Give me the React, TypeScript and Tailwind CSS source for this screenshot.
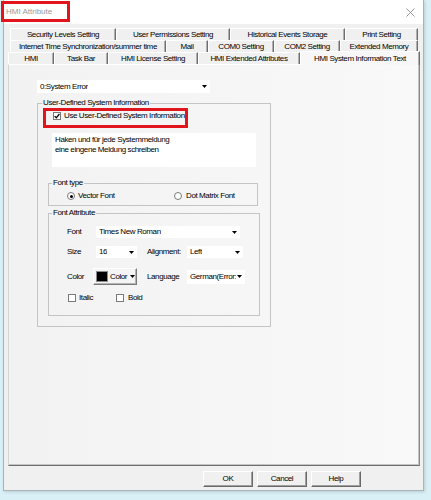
import React from 'react';

const font = "font-['Liberation_Sans',Arial,sans-serif] text-[8px] leading-[10px] tracking-[-0.4px] text-black";

interface Tab {
  label: string;
  w: string;
}

const row1: Tab[] = [
  { label: 'Security Levels Setting', w: 'w-[106px]' },
  { label: 'User Permissions Setting', w: 'w-[114px]' },
  { label: 'Historical Events Storage', w: 'w-[115px]' },
  { label: 'Print Setting', w: 'w-[73px]' },
];

const row2: Tab[] = [
  { label: 'Internet Time Synchronization/summer time', w: 'w-[156px]' },
  { label: 'Mail', w: 'w-[42px]' },
  { label: 'COM0 Setting', w: 'w-[66px]' },
  { label: 'COM2 Setting', w: 'w-[66px]' },
  { label: 'Extended Memory', w: 'w-[78px]' },
];

const row3: Tab[] = [
  { label: 'HMI', w: 'w-[46px]' },
  { label: 'Task Bar', w: 'w-[54px]' },
  { label: 'HMI License Setting', w: 'w-[90px]' },
  { label: 'HMI Extended Attributes', w: 'w-[102px]' },
];

function Arrow() {
  return (
    <svg width="5" height="3" viewBox="0 0 5 3" className="shrink-0">
      <path d="M0 0h5L2.5 3z" fill="#000" />
    </svg>
  );
}

function TabRow({ tabs }: { tabs: Tab[] }) {
  return (
    <>
      {tabs.map((t) => (
        <div
          key={t.label}
          className={`${t.w} h-[12px] flex items-center justify-center border-t border-l border-t-white border-l-white border-r border-r-[#6e6e6e] shadow-[inset_-1px_0_0_#b0b0b0] whitespace-nowrap`}
        >
          {t.label}
        </div>
      ))}
    </>
  );
}

function Dropdown({ className, text }: { className: string; text: string }) {
  return (
    <div className={`flex items-center justify-between bg-white pl-[3px] pr-[3px] ${className}`}>
      <span className="whitespace-nowrap overflow-hidden">{text}</span>
      <Arrow />
    </div>
  );
}

function Check({ checked }: { checked?: boolean }) {
  return (
    <div className="w-[8px] h-[8px] shrink-0 border border-[#7a7a7a] bg-white flex items-center justify-center">
      {checked && (
        <svg width="6" height="6" viewBox="0 0 6 6">
          <path d="M0.6 3.1L2.3 4.8L5.4 1" stroke="#000" strokeWidth="1.3" fill="none" />
        </svg>
      )}
    </div>
  );
}

function Radio({ checked }: { checked?: boolean }) {
  return (
    <div className="w-[8px] h-[8px] shrink-0 rounded-full border border-[#7a7a7a] bg-white flex items-center justify-center">
      {checked && <div className="w-[3px] h-[3px] rounded-full bg-black" />}
    </div>
  );
}

function Button({ label }: { label: string }) {
  return (
    <div className="w-[50px] h-[16px] flex items-center justify-center bg-[#f0f0f0] border border-t-white border-l-white border-r-[#696969] border-b-[#696969] shadow-[inset_-1px_-1px_0_#a0a0a0]">
      {label}
    </div>
  );
}

export default function App() {
  return (
    <div className={`relative w-[431px] h-[500px] bg-[#d9f0f6] pl-[3px] overflow-hidden ${font}`}>
      <div className="w-[421px] h-[491px] flex flex-col bg-[#f0f0f0] border-l border-r border-b border-[#a9b4b9] shadow-[1px_1px_3px_rgba(0,0,0,0.15)]">
        {/* title bar */}
        <div className="h-[24px] shrink-0 bg-white flex items-center justify-between pl-[2px] pr-[8px]">
          <span className="text-[8px] text-[#9a9a9a] tracking-[0px]">HMI Attribute</span>
          <svg width="9" height="9" viewBox="0 0 9 9">
            <path d="M0.5 0.5l8 8M8.5 0.5l-8 8" stroke="#8a8a8a" strokeWidth="0.9" />
          </svg>
        </div>

        {/* tabs */}
        <div className="pt-[4px] flex flex-col">
          <div className="flex ml-[6px]">
            <TabRow tabs={row1} />
          </div>
          <div className="flex ml-[6px]">
            <TabRow tabs={row2} />
          </div>
          <div className="flex items-end ml-[4px] h-[12px]">
            <TabRow tabs={row3} />
            <div className="relative z-10 -mb-[1px] w-[120px] h-[14px] flex items-center justify-center bg-[#f7f7f7] border-t border-l border-t-white border-l-white border-r border-r-[#6e6e6e] shadow-[inset_-1px_0_0_#b0b0b0] whitespace-nowrap">
              HMI System Information Text
            </div>
          </div>
        </div>

        {/* panel */}
        <div className="ml-[4px] w-[412px] h-[402px] shrink-0 border border-t-white border-l-[#d4d4d4] border-r-[#8a8a8a] border-b-[#6f6f6f] shadow-[inset_-1px_-1px_0_#c4c4c4] bg-gradient-to-r from-[#f2f2f2] to-[#f9f9f9] pl-[28px] pt-[15px]">
          <Dropdown className="w-[173px] h-[13px]" text="0:System Error" />

          <fieldset className="mt-[5px] w-[234px] h-[229px] border border-[#c4c4c4]">
            <legend className="ml-[4px] px-[1px] leading-[10px]">User-Defined System Information</legend>

            <div className="flex items-center h-[10px] mt-[3px] ml-[15px]">
              <Check checked />
              <span className="ml-[3px] whitespace-nowrap">Use User-Defined System Information</span>
            </div>

            <div className="mt-[12px] ml-[14px] w-[204px] h-[34px] bg-white pl-[3px] pt-[2px]">
              <div>Haken und für jede Systemmeldung</div>
              <div>eine eingene Meldung schreiben</div>
            </div>

            <fieldset className="mt-[11px] ml-[10px] w-[210px] h-[28px] border border-[#c4c4c4]">
              <legend className="ml-[3px] px-[1px] leading-[10px]">Font type</legend>
              <div className="flex items-center h-[10px] mt-[3px] ml-[18px]">
                <div className="w-[107px] flex items-center">
                  <Radio checked />
                  <span className="ml-[3px]">Vector Font</span>
                </div>
                <Radio />
                <span className="ml-[4px]">Dot Matrix Font</span>
              </div>
            </fieldset>

            <fieldset className="mt-[2px] ml-[10px] w-[212px] h-[108px] border border-[#c4c4c4]">
              <legend className="ml-[3px] px-[1px] leading-[10px]">Font Attribute</legend>

              <div className="flex items-center mt-[8px] ml-[18px]">
                <span className="w-[29px]">Font</span>
                <Dropdown className="w-[144px] h-[12px]" text="Times New Roman" />
              </div>

              <div className="flex items-center mt-[8px] ml-[18px]">
                <span className="w-[29px]">Size</span>
                <Dropdown className="w-[41px] h-[12px]" text="16" />
                <span className="ml-[10px] w-[40px]">Alignment:</span>
                <Dropdown className="w-[56px] h-[12px]" text="Left" />
              </div>

              <div className="flex items-center mt-[10px] ml-[18px]">
                <span className="w-[26px]">Color</span>
                <div className="w-[44px] h-[17px] flex items-center gap-[3px] pl-[3px] border border-t-white border-l-white border-r-[#7a7a7a] border-b-[#7a7a7a] shadow-[inset_-1px_-1px_0_#b4b4b4]">
                  <div className="w-[10px] h-[9px] bg-black outline outline-[#8a8a8a]" />
                  <span>Color</span>
                  <Arrow />
                </div>
                <span className="ml-[10px] w-[40px]">Language</span>
                <Dropdown className="w-[58px] h-[14px]" text="German(Error:" />
              </div>

              <div className="flex items-center h-[10px] mt-[8px] ml-[19px]">
                <div className="w-[48px] flex items-center">
                  <Check />
                  <span className="ml-[3px]">Italic</span>
                </div>
                <Check />
                <span className="ml-[4px]">Bold</span>
              </div>
            </fieldset>
          </fieldset>
        </div>

        {/* footer buttons */}
        <div className="flex justify-end gap-[4px] pt-[5px] pr-[62px]">
          <Button label="OK" />
          <Button label="Cancel" />
          <Button label="Help" />
        </div>
      </div>

      {/* red annotation frames */}
      <div className="absolute left-[1px] top-[1px] w-[69px] h-[21px] border-[3px] border-[#e3151c]" />
      <div className="absolute left-[43px] top-[108px] w-[145px] h-[20px] border-[3px] border-[#e3151c]" />
    </div>
  );
}
